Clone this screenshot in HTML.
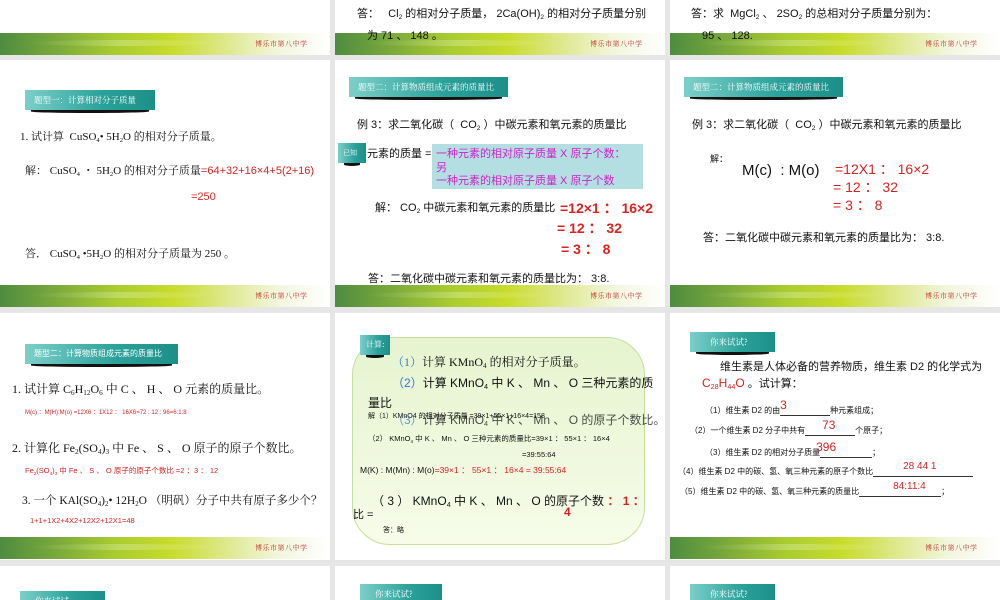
<!DOCTYPE html>
<html><head><meta charset="utf-8"><style>
*{margin:0;padding:0;box-sizing:border-box}
html,body{width:1000px;height:600px;overflow:hidden}
body{background:#e6e6e6;position:relative;font-family:"Liberation Sans","Noto Sans CJK SC",sans-serif;color:#111}
.s{position:absolute;background:#fff;width:330px;height:247px}
.band{position:absolute;height:22px;width:330px;
background:linear-gradient(90deg,#4f8c40 0%,#7dab3a 18%,#a9cc30 35%,#c8dc2a 52%,#dde88a 68%,#f2f6dc 84%,#fff 100%)}
.band:before{content:"";position:absolute;left:30px;top:7px;width:190px;height:6px;border-radius:50%;background:linear-gradient(90deg,rgba(255,255,255,0),rgba(255,255,255,.25),rgba(255,255,255,0))}
.band span{position:absolute;left:255px;top:6px;font-size:7px;color:#c8302a;font-family:"Noto Serif CJK SC",serif;letter-spacing:.5px}
.t{position:absolute;white-space:nowrap;font-size:11px;line-height:1}
.sr{font-family:"Liberation Serif","Noto Serif CJK SC",serif}
.r{color:#e02020}
.lab{position:absolute;height:20px;background:linear-gradient(90deg,#7ccfc9,#2aa19a 60%,#1d8f89);color:#fff;font-size:8.5px;line-height:20px;padding-left:9px;font-family:"Noto Serif CJK SC",serif;white-space:nowrap}
.lab:after{content:"";position:absolute;left:6px;right:6px;bottom:-3px;height:3px;background:#111;border-radius:0 0 50% 50%}
.clip{position:absolute;left:0;top:566px;width:1000px;height:34px;overflow:hidden}
sub{font-size:60%;vertical-align:-2px}
.u{display:inline-block;border-bottom:1px solid #333}
</style></head><body>

<!-- row0 -->
<div class="s" style="left:0;top:0;height:55px"></div>
<div class="s" style="left:335px;top:0;height:55px"></div>
<div class="s" style="left:670px;top:0;height:55px"></div>
<div class="band" style="left:0;top:33px"><span>博乐市第八中学</span></div>
<div class="band" style="left:335px;top:33px"><span>博乐市第八中学</span></div>
<div class="band" style="left:670px;top:33px"><span>博乐市第八中学</span></div>
<div class="t" style="left:357px;top:9px">答：&nbsp;&nbsp; Cl<sub>2</sub> 的相对分子质量， 2Ca(OH)<sub>2</sub> 的相对分子质量分别</div>
<div class="t" style="left:367px;top:31px">为 71 、 148 。</div>
<div class="t" style="left:691px;top:9px">答：求&nbsp; MgCl<sub>2</sub> 、 2SO<sub>2</sub> 的总相对分子质量分别为：</div>
<div class="t" style="left:702px;top:31px">95 、 128.</div>

<!-- row1 -->
<div class="s" style="left:0;top:60px"></div>
<div class="s" style="left:335px;top:60px"></div>
<div class="s" style="left:670px;top:60px"></div>
<div class="band" style="left:0;top:285px"><span>博乐市第八中学</span></div>
<div class="band" style="left:335px;top:285px"><span>博乐市第八中学</span></div>
<div class="band" style="left:670px;top:285px"><span>博乐市第八中学</span></div>

<div class="lab" style="left:25px;top:90px;width:130px">题型一：计算相对分子质量</div>
<div class="t sr" style="left:20px;top:132px">1. 试计算&nbsp; CuSO<sub>4</sub>• 5H<sub>2</sub>O 的相对分子质量。</div>
<div class="t sr" style="left:25px;top:166px">解： CuSO<sub>4</sub> ・ 5H<sub>2</sub>O 的相对分子质量<span class="r" style="font-family:'Liberation Sans',sans-serif">=64+32+16×4+5(2+16)</span></div>
<div class="t r" style="left:191px;top:192px">=250</div>
<div class="t sr" style="left:25px;top:249px">答． CuSO<sub>4</sub> •5H<sub>2</sub>O 的相对分子质量为 250 。</div>

<div class="lab" style="left:349px;top:77px;width:159px">题型二：计算物质组成元素的质量比</div>
<div class="t" style="left:357px;top:120px">例 3：求二氧化碳（&nbsp; CO<sub>2</sub> ）中碳元素和氧元素的质量比</div>
<div class="lab" style="left:338px;top:143px;width:28px;padding-left:5px;font-size:7px">已知</div>
<div class="t" style="left:367px;top:149px">元素的质量 =</div>
<div style="position:absolute;left:432px;top:144px;width:211px;height:45px;background:#b3dfe2"></div>
<div class="t" style="left:436px;top:148px;color:#d020c8;line-height:13.5px">一种元素的相对原子质量 X 原子个数：<br>另<br>一种元素的相对原子质量 X 原子个数</div>
<div class="t" style="left:375px;top:203px">解： CO<sub>2</sub> 中碳元素和氧元素的质量比</div>
<div class="t r" style="left:560px;top:201px;font-size:14px;font-weight:bold">=12×1 ： 16×2</div>
<div class="t r" style="left:557px;top:221px;font-size:14px;font-weight:bold">= 12 ： 32</div>
<div class="t r" style="left:561px;top:242px;font-size:14px;font-weight:bold">= 3 ： 8</div>
<div class="t" style="left:368px;top:274px">答：二氧化碳中碳元素和氧元素的质量比为： 3:8.</div>

<div class="lab" style="left:684px;top:77px;width:159px">题型二：计算物质组成元素的质量比</div>
<div class="t" style="left:692px;top:120px">例 3：求二氧化碳（&nbsp; CO<sub>2</sub> ）中碳元素和氧元素的质量比</div>
<div class="t" style="left:710px;top:155px;font-size:9px">解：</div>
<div class="t" style="left:742px;top:163px;font-size:15px">M(c)&nbsp; : M(o)</div>
<div class="t r" style="left:835px;top:162px;font-size:14px">=12X1 ： 16×2</div>
<div class="t r" style="left:833px;top:180px;font-size:14px">= 12 ： 32</div>
<div class="t r" style="left:833px;top:198px;font-size:14px">= 3 ： 8</div>
<div class="t" style="left:703px;top:233px">答：二氧化碳中碳元素和氧元素的质量比为： 3:8.</div>

<!-- row2 -->
<div class="s" style="left:0;top:313px"></div>
<div class="s" style="left:335px;top:313px"></div>
<div class="s" style="left:670px;top:313px"></div>
<div class="band" style="left:0;top:537px"><span>博乐市第八中学</span></div>
<div class="band" style="left:670px;top:537px"><span>博乐市第八中学</span></div>

<div class="lab" style="left:25px;top:344px;width:153px;font-family:'Noto Sans CJK SC',sans-serif;font-size:8px">题型二：计算物质组成元素的质量比</div>
<div class="t sr" style="left:12px;top:383px;font-size:12px">1. 试计算 C<sub>6</sub>H<sub>12</sub>O<sub>6</sub> 中 C 、 H 、 O 元素的质量比。</div>
<div class="t r" style="left:25px;top:410px;font-size:6px">M(c) ：M(H):M(o) =12X6 ：1X12 ： 16X6=72 : 12 : 96=6:1:8</div>
<div class="t sr" style="left:12px;top:442px;font-size:12px">2. 计算化 Fe<sub>2</sub>(SO<sub>4</sub>)<sub>3</sub> 中 Fe 、 S 、 O 原子的原子个数比。</div>
<div class="t r" style="left:25px;top:467px;font-size:7.5px">Fe<sub>2</sub>(SO<sub>4</sub>)<sub>3</sub> 中 Fe 、 S 、 O 原子的原子个数比 =2 ：3 ： 12</div>
<div class="t sr" style="left:22px;top:496px;font-size:11.5px">3. 一个 KAl(SO<sub>4</sub>)<sub>2</sub>• 12H<sub>2</sub>O （明矾）分子中共有原子多少个？</div>
<div class="t r" style="left:30px;top:517px;font-size:7.5px">1+1+1X2+4X2+12X2+12X1=48</div>

<div style="position:absolute;left:352px;top:337px;width:293px;height:208px;border-radius:38px;border:1px solid #c5df9a;background:linear-gradient(180deg,#e6f4cf,#f6fce9)"></div>
<div class="lab" style="left:360px;top:335px;width:30px;padding-left:6px;font-size:8px">计算:</div>
<div class="t sr" style="left:392px;top:356px;font-size:12px"><span style="color:#2a7ad8">（1）</span>计算 KMnO<sub>4</sub> 的相对分子质量。</div>
<div class="t" style="left:392px;top:377px;font-size:12px"><span style="color:#2a7ad8">（2）</span>计算 KMnO<sub>4</sub> 中 K 、 Mn 、 O 三种元素的质</div>
<div class="t" style="left:368px;top:397px;font-size:12px">量比</div>
<div class="t" style="left:368px;top:413px;font-size:7px">解（1）KMnO4 的相对分子质量 =39×1+55×1+16×4=158</div>
<div class="t" style="left:392px;top:414px;font-size:12px;opacity:.75"><span style="color:#2a7ad8">（3）</span>计算 KMnO<sub>4</sub> 中 K 、 Mn 、 O 的原子个数比。</div>
<div class="t" style="left:368px;top:435px;font-size:7.5px">（2） KMnO<sub>4</sub> 中 K 、 Mn 、 O 三种元素的质量比=39×1 ： 55×1 ： 16×4</div>
<div class="t" style="left:522px;top:451px;font-size:7.5px">=39:55:64</div>
<div class="t" style="left:360px;top:466px;font-size:8.5px">M(K) : M(Mn) : M(o)<span class="r">=39×1 ： 55×1 ： 16×4 = 39:55:64</span></div>
<div class="t" style="left:372px;top:495px;font-size:12px">（ 3 ） KMnO<sub>4</sub> 中 K 、 Mn 、 O 的原子个数 <span class="r" style="font-weight:bold">： 1 ：</span></div>
<div class="t r" style="left:564px;top:506px;font-size:12px;font-weight:bold">4</div>
<div class="t" style="left:353px;top:510px;font-size:11px">比 =</div>
<div class="t" style="left:383px;top:527px;font-size:7px">答：略</div>

<div class="lab" style="left:690px;top:332px;width:85px;padding-left:20px">你来试试?</div>
<div class="t" style="left:720px;top:362px;font-size:11px">维生素是人体必备的营养物质，维生素 D2 的化学式为</div>
<div class="t" style="left:702px;top:377px;font-size:11px"><span class="r" style="font-size:12px">C<sub>28</sub>H<sub>44</sub>O</span> 。试计算：</div>
<div class="t" style="left:705px;top:407px;font-size:8px">（1）维生素 D2 的由<span class="u" style="width:50px;position:relative"><span class="r" style="position:absolute;left:0;top:-8px;font-size:12px">3</span>&nbsp;</span>种元素组成；</div>
<div class="t" style="left:690px;top:427px;font-size:8px">（2）一个维生素 D2 分子中共有<span class="u" style="width:50px;position:relative"><span class="r" style="position:absolute;left:17px;top:-8px;font-size:12px">73</span>&nbsp;</span>个原子；</div>
<div class="t" style="left:705px;top:449px;font-size:8px">（3）维生素 D2 的相对分子质量<span class="u" style="width:52px;position:relative"><span class="r" style="position:absolute;left:-4px;top:-8px;font-size:12px">396</span>&nbsp;</span>；</div>
<div class="t" style="left:678px;top:468px;font-size:8px">（4）维生素 D2 中的碳、氢、氧三种元素的原子个数比<span class="u" style="width:100px;position:relative"><span class="r" style="position:absolute;left:30px;top:-6px;font-size:10px">28 44 1</span>&nbsp;</span></div>
<div class="t" style="left:680px;top:488px;font-size:8px">（5）维生素 D2 中的碳、氢、氧三种元素的质量比<span class="u" style="width:82px;position:relative"><span class="r" style="position:absolute;left:34px;top:-6px;font-size:10px">84:11:4</span>&nbsp;</span>；</div>

<!-- row3 -->
<div class="clip">
<div class="s" style="left:0;top:0;height:34px"></div>
<div class="s" style="left:335px;top:0;height:34px"></div>
<div class="s" style="left:670px;top:0;height:34px"></div>
<div class="lab" style="left:20px;top:25px;width:85px;padding-left:15px">你来试试</div>
<div class="lab" style="left:360px;top:18px;width:82px;padding-left:15px">你来试试?</div>
<div class="lab" style="left:690px;top:18px;width:85px;padding-left:20px">你来试试?</div>
</div>
</body></html>
